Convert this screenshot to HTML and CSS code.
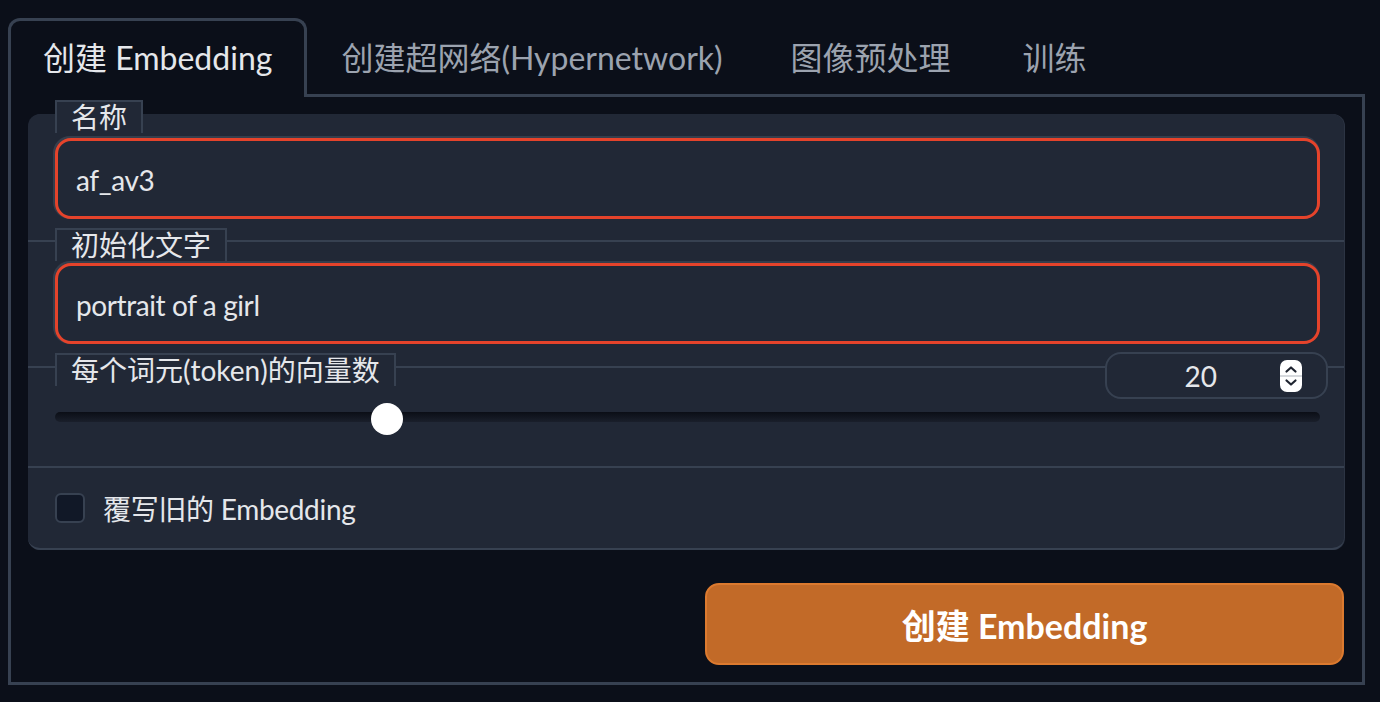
FILE: index.html
```html
<!DOCTYPE html>
<html lang="zh">
<head>
<meta charset="utf-8">
<link rel="stylesheet" href="styles.css">
</head>
<body>
<div class="tabs">
  <div class="tabnav">
    <button class="tab active">创建 Embedding</button>
    <button class="tab">创建超网络(Hypernetwork)</button>
    <button class="tab">图像预处理</button>
    <button class="tab">训练</button>
    <div class="tabfill"></div>
  </div>
  <div class="panel">
    <div class="form">
      <div class="row row-name">
        <span class="label">名称</span>
        <div class="textbox">af_av3</div>
      </div>
      <div class="row row-init">
        <span class="label">初始化文字</span>
        <div class="textbox">portrait of a girl</div>
      </div>
      <div class="row row-slider">
        <div class="slider-head">
          <span class="label">每个词元(token)的向量数</span>
          <div class="number">
            <span class="number-value">20</span>
            <svg class="spinner" width="22" height="32" viewBox="0 0 22 32">
              <rect x="0" y="0" width="22" height="32" rx="7" fill="#ffffff"/>
              <line x1="0" y1="16" x2="22" y2="16" stroke="#c9ccd2" stroke-width="1.5"/>
              <path d="M6.5 11.5 L11 7.5 L15.5 11.5" fill="none" stroke="#1f2430" stroke-width="2.2" stroke-linecap="round" stroke-linejoin="round"/>
              <path d="M6.5 20.5 L11 24.5 L15.5 20.5" fill="none" stroke="#1f2430" stroke-width="2.2" stroke-linecap="round" stroke-linejoin="round"/>
            </svg>
          </div>
        </div>
        <div class="slider">
          <div class="track"></div>
          <div class="thumb" style="left: 316px"></div>
        </div>
      </div>
      <div class="row row-check">
        <span class="checkbox"></span>
        <span class="check-label">覆写旧的 Embedding</span>
      </div>
    </div>
    <div class="actions">
      <button class="primary">创建 Embedding</button>
    </div>
  </div>
</div>
</body>
</html>
```

FILE: styles.css
```css
* { box-sizing: border-box; }

html, body {
  margin: 0;
  background: #0b0f19;
}

body {
  padding: 18px 15px 0 8px;
  font-family: Lato, "Noto Sans CJK SC", sans-serif;
  color: #e5e7eb;
}

.tabnav {
  display: flex;
  align-items: flex-end;
}

.tab {
  font-family: inherit;
  font-size: 32px;
  line-height: 1;
  height: 79px;
  padding: 4px 34px 0;
  background: transparent;
  color: #9ca3af;
  border: none;
  border-bottom: 3px solid #374151;
  margin: 0;
  white-space: nowrap;
  cursor: pointer;
}

.tab:last-of-type {
  padding-left: 38px;
}

.tab.active {
  color: #e5e7eb;
  border: 3px solid #374151;
  border-bottom: none;
  padding: 1px 32px 3px;
  border-radius: 12px 12px 0 0;
  background: #0b0f19;
}

.tabfill {
  flex: 1;
  border-bottom: 3px solid #374151;
}

.panel {
  border: 3px solid #374151;
  border-top: none;
  padding: 17px 18px 17px 17px;
}

.form {
  background: #212836;
  border-radius: 12px;
  border-bottom: 2px solid #374151;
  box-shadow: 1px 0 0 #2c3443;
}

.row {
  display: flex;
  flex-direction: column;
  align-items: flex-start;
  padding: 0 24px 21px 27px;
}

.row + .row {
  border-top: 2px solid #374151;
}

.label {
  display: block;
  flex: none;
  font-size: 28px;
  line-height: 31px;
  height: 33px;
  padding: 0 14px;
  background: #212836;
  border: 2px solid #374151;
  border-bottom: none;
  color: #e5e7eb;
  white-space: nowrap;
  margin-top: -14px;
}

.textbox {
  align-self: stretch;
  height: 81px;
  margin-top: 5px;
  border: 3px solid #e5432b;
  border-radius: 16px;
  background: #212836;
  box-shadow: -1px -1px 0 1px #363e4c;
  font-size: 28px;
  letter-spacing: -0.4px;
  display: flex;
  align-items: center;
  padding: 2px 18px 0;
  color: #e5e7eb;
}

.row-init { padding-bottom: 22px; }
.row-init .textbox { margin-top: 2px; }

.row-slider {
  align-items: stretch;
  padding: 0 16px 31px 27px;
}

.slider-head {
  display: flex;
  justify-content: space-between;
  align-items: flex-start;
}

.slider-head .label { margin-top: -15px; }

.number {
  margin-top: -16px;
  width: 223px;
  height: 47px;
  border: 2px solid #374151;
  border-radius: 16px;
  background: #212836;
  display: flex;
  align-items: center;
  padding-right: 24px;
  font-size: 28px;
}

.number-value {
  flex: 1;
  text-align: right;
  margin-right: 63px;
}

.spinner { display: block; }

.slider {
  position: relative;
  height: 32px;
  margin-top: 4px;
  margin-right: 8px;
}

.track {
  position: absolute;
  left: 0;
  right: 0;
  top: 9px;
  height: 10px;
  border-radius: 5px;
  background: linear-gradient(#0b0e16, #1a1f2b);
}

.thumb {
  position: absolute;
  top: 0;
  width: 32px;
  height: 32px;
  border-radius: 50%;
  background: #ffffff;
}

.row-check {
  height: 82px;
  flex-direction: row;
  align-items: center;
  padding: 0 24px 0 27px;
}

.checkbox {
  width: 30px;
  height: 30px;
  border-radius: 6px;
  border: 2px solid #374151;
  background: #111827;
  flex: none;
}

.check-label {
  margin-left: 18px;
  font-size: 28px;
  letter-spacing: -0.3px;
  color: #e5e7eb;
}

.actions {
  display: flex;
  justify-content: flex-end;
  margin-top: 33px;
}

.primary {
  width: 639px;
  height: 82px;
  border: 2px solid #dc7a2f;
  border-radius: 14px;
  background: #c26a28;
  color: #ffffff;
  font-family: inherit;
  font-size: 34px;
  font-weight: 700;
  cursor: pointer;
}
```
